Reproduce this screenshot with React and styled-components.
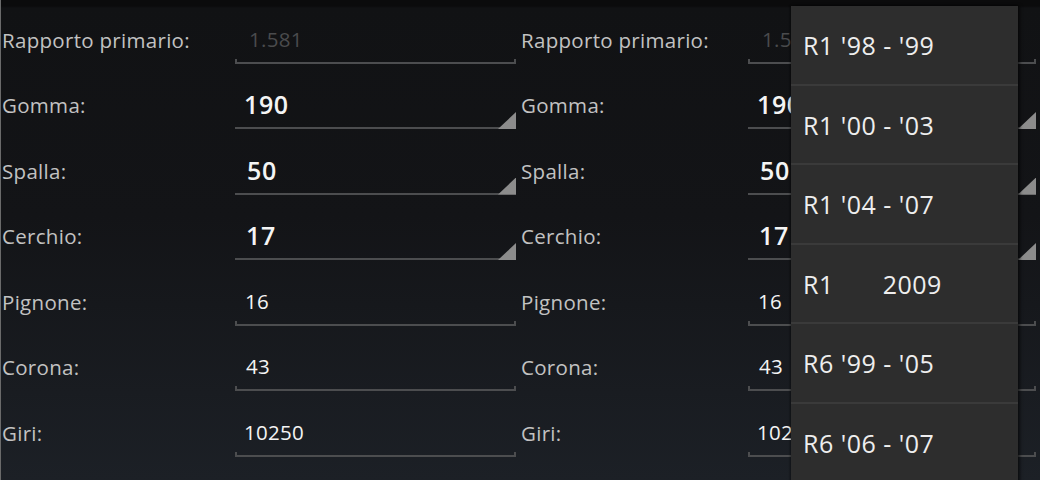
import React from 'react';
import styled, { createGlobalStyle } from 'styled-components';

const GlobalStyle = createGlobalStyle`
  html, body {
    margin: 0;
    padding: 0;
    width: 1040px;
    height: 480px;
    overflow: hidden;
    background: #111214;
  }
`;

const Screen = styled.div`
  position: relative;
  width: 1040px;
  height: 480px;
  overflow: hidden;
  box-sizing: border-box;
  padding-left: 1px;
  border-left: 1px solid #6a6a6a;
  background: linear-gradient(180deg, #0b0b0c 0px, #0b0b0c 6px, #111214 8px, #131417 45%, #1c2026 100%);
  font-family: "Open Sans", "DejaVu Sans", sans-serif;
  display: grid;
  grid-template-columns: 519px 519px;
`;

const Column = styled.div`
  display: flex;
  flex-direction: column;
`;

const Row = styled.div`
  height: 65.5px;
  display: flex;
  align-items: flex-end;
  padding-bottom: 2px;
  box-sizing: border-box;
`;

const Label = styled.div`
  width: ${({ $w }) => $w}px;
  flex-shrink: 0;
  height: 48px;
  display: flex;
  align-items: center;
  font-size: 20.5px;
  letter-spacing: 0.3px;
  color: #c2c2c2;
  white-space: nowrap;
`;

const Field = styled.div`
  position: relative;
  width: ${({ $w }) => $w}px;
  height: 48px;
  box-sizing: border-box;
  display: flex;
  align-items: center;
  padding-left: ${({ $pad }) => $pad}px;
  border-bottom: 2px solid #4c4d4f;
  color: ${({ $disabled }) => ($disabled ? '#4a4b4d' : '#f4f4f4')};
  font-size: ${({ $spinner }) => ($spinner ? 25 : 20.5)}px;
  font-weight: ${({ $spinner }) => ($spinner ? 600 : 400)};
  letter-spacing: ${({ $spinner }) => ($spinner ? 0.6 : 0.3)}px;
  white-space: nowrap;

  &::before,
  &::after {
    content: '';
    position: absolute;
    bottom: -2px;
    width: 2px;
    height: 5px;
    background: #4c4d4f;
    display: ${({ $spinner }) => ($spinner ? 'none' : 'block')};
  }
  &::before { left: 0; }
  &::after { right: 0; }
`;

const Corner = styled.span`
  position: absolute;
  right: 0;
  bottom: -2px;
  width: 18px;
  height: 17px;
  background: #8c8c8c;
  clip-path: polygon(100% 0, 100% 100%, 0 100%);
`;

const Dropdown = styled.div`
  position: absolute;
  left: 790px;
  top: 6px;
  width: 227px;
  height: 490px;
  background: #2d2d2d;
  box-shadow: 2px 0 3px rgba(0, 0, 0, 0.6), -1px 0 2px rgba(0, 0, 0, 0.4);
  display: flex;
  flex-direction: column;
`;

const Item = styled.div`
  height: 79.5px;
  flex-shrink: 0;
  box-sizing: border-box;
  display: flex;
  align-items: center;
  padding-left: 12px;
  padding-top: 1px;
  border-bottom: 2px solid #3a3a3a;
  color: #eeeeee;
  font-size: 25px;
  letter-spacing: 0.5px;
  white-space: pre;
`;

const rows = [
  { label: 'Rapporto primario:', value: '1.581', disabled: true, pad: 14 },
  { label: 'Gomma:', value: '190', spinner: true, pad: 9 },
  { label: 'Spalla:', value: '50', spinner: true, pad: 12 },
  { label: 'Cerchio:', value: '17', spinner: true, pad: 11 },
  { label: 'Pignone:', value: '16', pad: 10 },
  { label: 'Corona:', value: '43', pad: 11 },
  { label: 'Giri:', value: '10250', pad: 9 },
];

const models = [
  "R1 '98 - '99",
  "R1 '00 - '03",
  "R1 '04 - '07",
  'R1       2009',
  "R6 '99 - '05",
  "R6 '06 - '07",
];

function FormColumn({ labelWidth, fieldWidth }) {
  return (
    <Column>
      {rows.map((r) => (
        <Row key={r.label}>
          <Label $w={labelWidth}>{r.label}</Label>
          <Field $w={fieldWidth} $pad={r.pad} $spinner={r.spinner} $disabled={r.disabled}>
            {r.value}
            {r.spinner && <Corner />}
          </Field>
        </Row>
      ))}
    </Column>
  );
}

export default function App() {
  return (
    <>
      <GlobalStyle />
      <Screen>
        <FormColumn labelWidth={233} fieldWidth={281} />
        <FormColumn labelWidth={227} fieldWidth={288} />
        <Dropdown>
          {models.map((m) => (
            <Item key={m}>{m}</Item>
          ))}
        </Dropdown>
      </Screen>
    </>
  );
}
